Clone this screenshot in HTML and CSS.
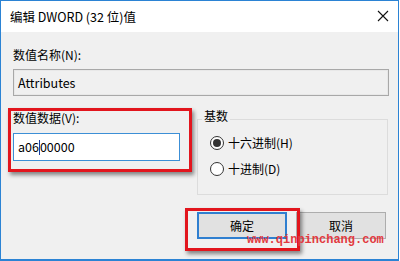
FILE: index.html
```html
<!DOCTYPE html>
<html>
<head>
<meta charset="utf-8">
<link rel="stylesheet" href="styles.css">
</head>
<body>
<div class="window">
  <div class="titlebar">
    <span class="title">编辑 DWORD (32 位)值</span>
    <svg class="close" width="12" height="12" viewBox="0 0 12 12"><path d="M1 1L11 11M11 1L1 11" stroke="#111" stroke-width="1.1" fill="none"/></svg>
  </div>
  <div class="content">
    <div class="label first">数值名称(N):</div>
    <div class="textbox readonly">Attributes</div>
    <div class="row">
      <div class="col-left">
        <div class="label">数值数据(V):</div>
        <div class="textbox edit">a06<span class="caret"></span>00000</div>
      </div>
      <div class="group">
        <div class="group-label">基数</div>
        <div class="radio checked"><span class="dot"></span>十六进制(H)</div>
        <div class="radio"><span class="dot"></span>十进制(D)</div>
      </div>
    </div>
    <div class="buttons">
      <div class="btn default">确定</div>
      <div class="btn">取消</div>
    </div>
  </div>
  <div class="mark mark1"></div>
  <div class="mark mark2"></div>
  <div class="watermark">www.qinpinchang.com</div>
</div>
</body>
</html>
```

FILE: styles.css
```css
html, body {
  margin: 0;
  padding: 0;
  background: #ffffff;
}
body {
  font-family: "Noto Sans CJK SC", "Noto Sans", sans-serif;
  font-size: 12px;
  color: #000;
}
.window {
  position: relative;
  width: 399px;
  height: 261px;
  box-sizing: border-box;
  border: 1px solid #2b83d4;
  border-bottom-width: 2px;
  background: #f0f0f0;
  overflow: hidden;
}
.titlebar {
  height: 31px;
  background: #ffffff;
  display: flex;
  align-items: center;
  justify-content: space-between;
  padding: 0 9px 0 9px;
}
.title {
  font-size: 12.5px;
  line-height: 16px;
  color: #000;
}
.close {
  display: block;
  margin-top: -1px;
}
.content {
  padding: 0 9px 0 12px;
}
.label {
  line-height: 16px;
  height: 16px;
}
.label.first {
  padding-top: 15px;
}
.textbox {
  box-sizing: border-box;
  font-size: 12.5px;
  line-height: 16px;
  padding: 5px 4px;
  display: flex;
  align-items: center;
}
.readonly {
  margin-top: 6px;
  height: 27px;
  border: 1px solid #a8a8a8;
  box-shadow: inset 0 0 0 1px #e8e8e8;
  background: #f0f0f0;
}
.row {
  display: flex;
  margin-top: 14px;
}
.col-left {
  width: 167px;
}
.edit {
  margin-top: 7px;
  height: 28px;
  border: 1px solid #3c8fd6;
  background: #ffffff;
}
.caret {
  display: inline-block;
  width: 1px;
  height: 15px;
  background: #1a3fa0;
}
.group {
  box-sizing: border-box;
  margin-top: 9px;
  margin-left: 17px;
  width: 191px;
  height: 76px;
  border: 1px solid #dcdcdc;
  padding: 0 0 0 12px;
}
.group-label {
  margin-top: -12px;
  margin-left: -8px;
  width: fit-content;
  padding: 0 2px;
  background: #f0f0f0;
  line-height: 16px;
}
.radio {
  display: flex;
  align-items: center;
  gap: 4px;
  line-height: 16px;
  height: 16px;
  margin-top: 11px;
}
.radio + .radio {
  margin-top: 10px;
}
.dot {
  box-sizing: border-box;
  width: 14px;
  height: 14px;
  border: 1px solid #333;
  border-radius: 50%;
  background: #ffffff;
  display: flex;
  align-items: center;
  justify-content: center;
}
.checked .dot::after {
  content: "";
  width: 8px;
  height: 8px;
  border-radius: 50%;
  background: #333;
}
.buttons {
  display: flex;
  justify-content: flex-end;
  gap: 9px;
  margin-top: 17px;
  margin-right: 3px;
}
.btn {
  box-sizing: border-box;
  width: 90px;
  height: 27px;
  border: 1px solid #adadad;
  background: #e1e1e1;
  display: flex;
  align-items: center;
  justify-content: center;
  line-height: 16px;
}
.btn.default {
  border: 2px solid #2f7fd0;
}
.mark {
  position: absolute;
  box-sizing: border-box;
  border: 3px solid #e2151d;
  box-shadow: 2px 3px 4px rgba(0, 0, 0, 0.45);
}
.mark1 {
  left: 7px;
  top: 107px;
  width: 184px;
  height: 64px;
}
.mark2 {
  left: 184px;
  top: 207px;
  width: 115px;
  height: 43px;
}
.watermark {
  position: absolute;
  left: 246px;
  top: 232px;
  font-family: "Liberation Mono", monospace;
  font-size: 12px;
  font-weight: bold;
  line-height: 14px;
  color: #e23a3f;
}
```
